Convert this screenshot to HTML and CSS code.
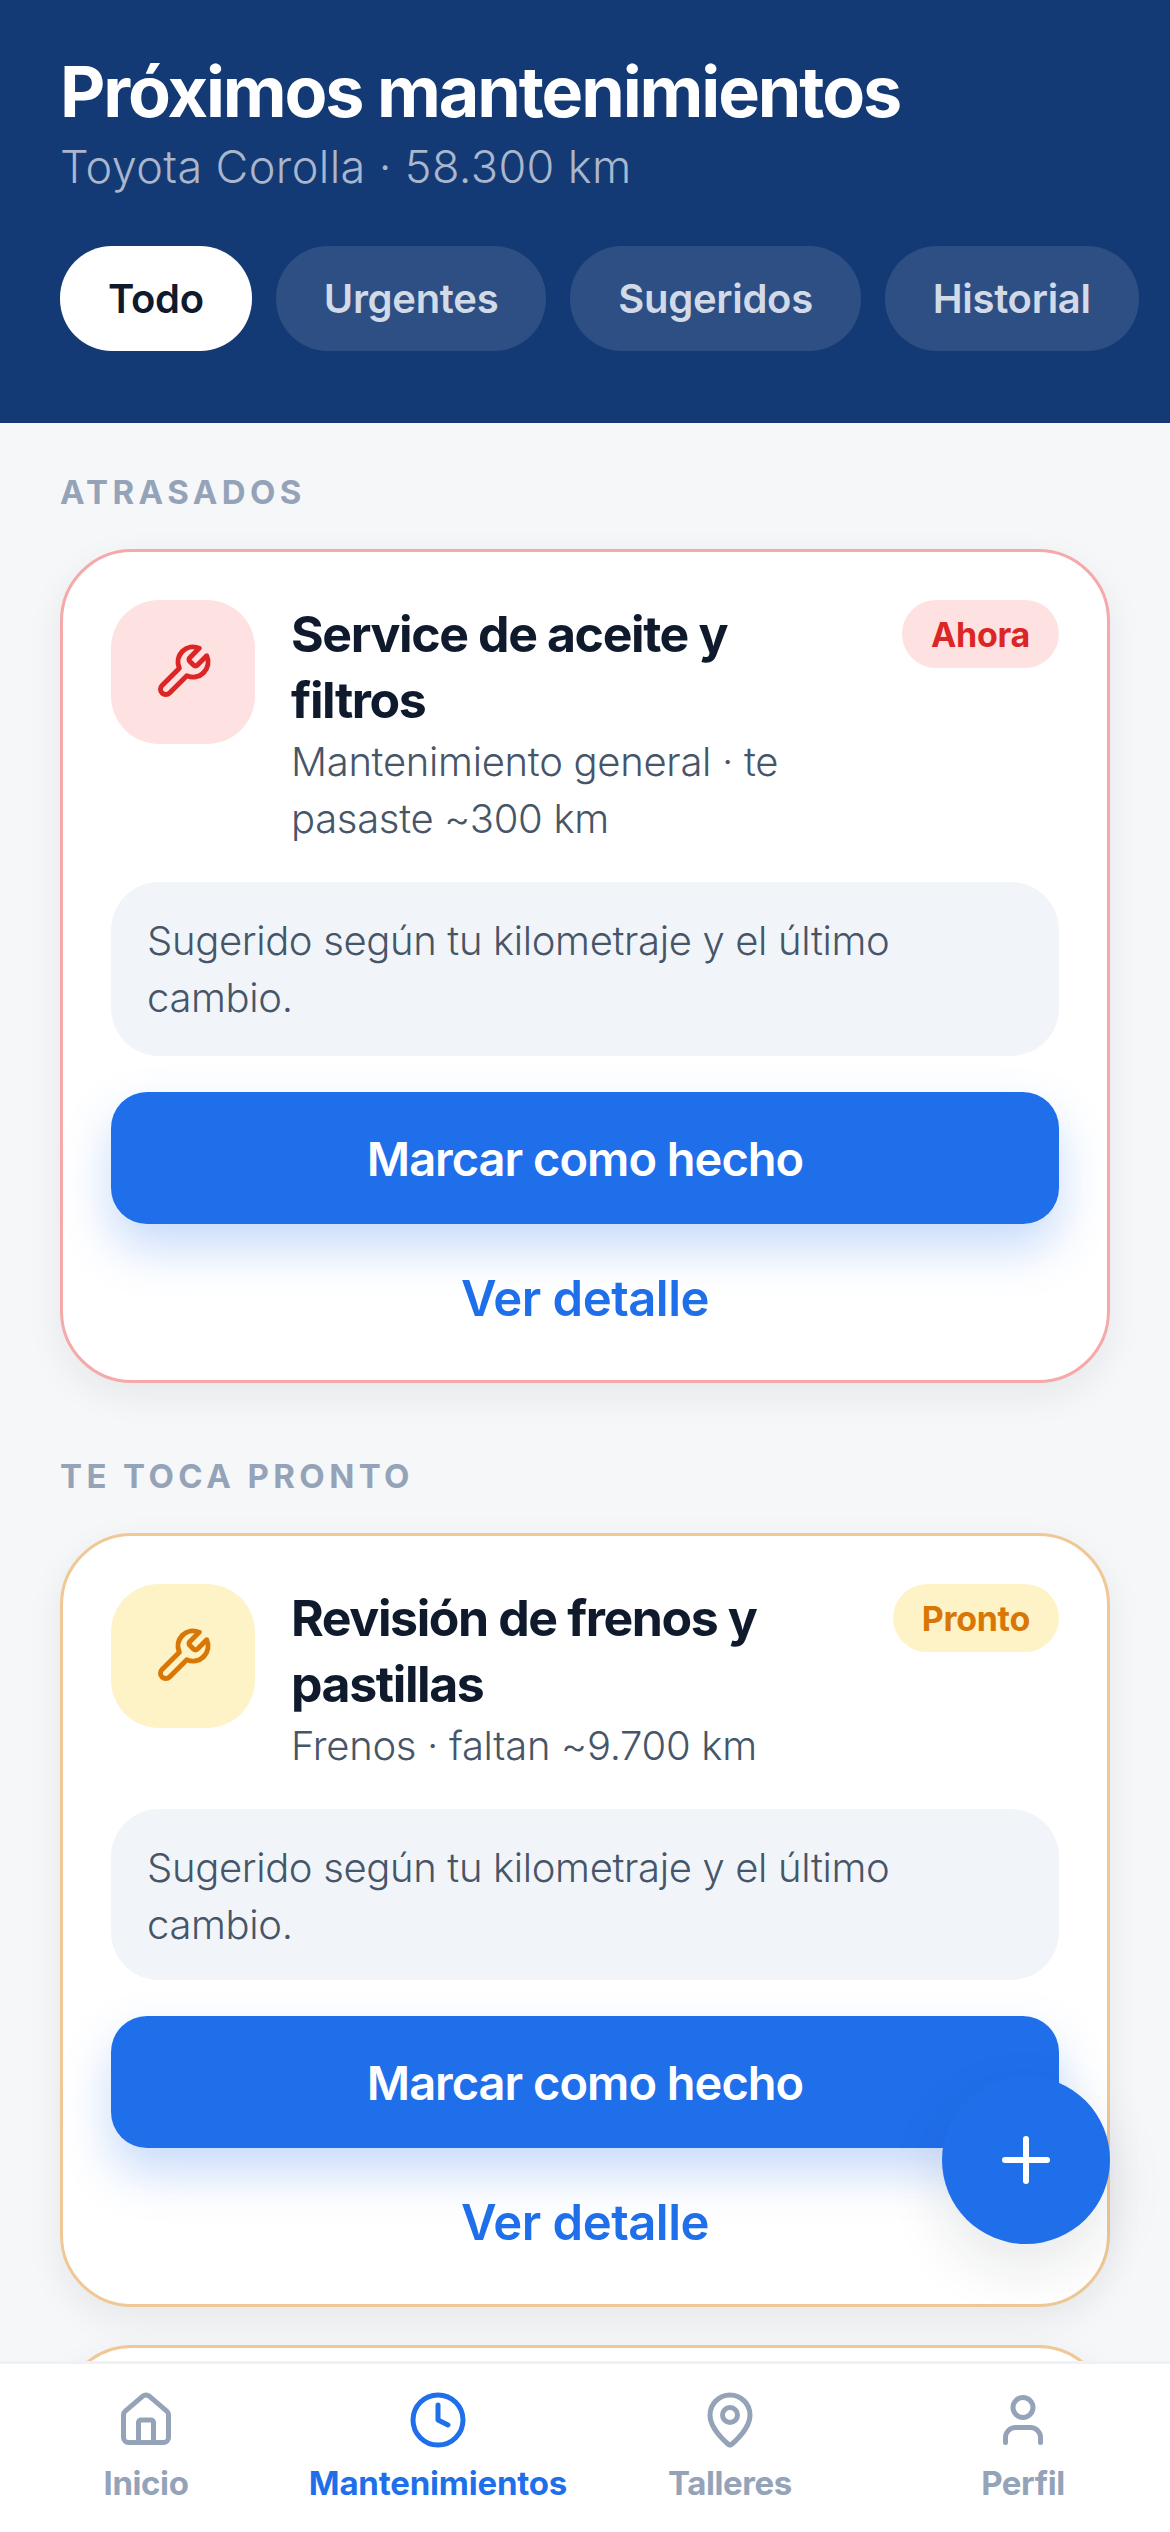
FILE: index.html
```html
<!DOCTYPE html>
<html lang="es">
<head>
  <meta charset="UTF-8"/>
  <meta name="viewport" content="width=device-width, initial-scale=1.0"/>
  <title>Próximos mantenimientos</title>
  <link rel="stylesheet" href="styles.css">
</head>
<body>
  <div class="app">
    <header class="top">
      <h1>Próximos mantenimientos</h1>
      <p class="car">Toyota Corolla · 58.300 km</p>
      <div class="chips">
        <div class="chip active">Todo</div>
        <div class="chip">Urgentes</div>
        <div class="chip">Sugeridos</div>
        <div class="chip">Historial</div>
      </div>
    </header>

    <main class="list">
      <h2>ATRASADOS</h2>
      <section class="card late">
        <div class="head">
          <div class="icon">
            <svg viewBox="0 0 24 24"><path d="M14.7 6.3a1 1 0 0 0 0 1.4l1.6 1.6a1 1 0 0 0 1.4 0l3.77-3.77a6 6 0 0 1-7.94 7.94l-6.91 6.91a2.12 2.12 0 0 1-3-3l6.91-6.91a6 6 0 0 1 7.94-7.94l-3.76 3.76z"/></svg>
          </div>
          <div class="info">
            <h3>Service de aceite y filtros</h3>
            <p>Mantenimiento general · te pasaste ~300 km</p>
          </div>
          <span class="badge">Ahora</span>
        </div>
        <p class="note">Sugerido según tu kilometraje y el último cambio.</p>
        <button class="done">Marcar como hecho</button>
        <a class="more">Ver detalle</a>
      </section>

      <h2>TE TOCA PRONTO</h2>
      <section class="card soon">
        <div class="head">
          <div class="icon">
            <svg viewBox="0 0 24 24"><path d="M14.7 6.3a1 1 0 0 0 0 1.4l1.6 1.6a1 1 0 0 0 1.4 0l3.77-3.77a6 6 0 0 1-7.94 7.94l-6.91 6.91a2.12 2.12 0 0 1-3-3l6.91-6.91a6 6 0 0 1 7.94-7.94l-3.76 3.76z"/></svg>
          </div>
          <div class="info">
            <h3>Revisión de frenos y pastillas</h3>
            <p>Frenos · faltan ~9.700 km</p>
          </div>
          <span class="badge">Pronto</span>
        </div>
        <p class="note">Sugerido según tu kilometraje y el último cambio.</p>
        <button class="done">Marcar como hecho</button>
        <a class="more">Ver detalle</a>
      </section>

      <section class="card soon next"></section>
    </main>

    <button class="fab" aria-label="Agregar">
      <svg viewBox="0 0 48 48"><path d="M24 3v42M3 24h42"/></svg>
    </button>

    <nav class="tabs">
      <a class="tab">
        <svg viewBox="0 0 24 24"><path d="M15 21v-8a1 1 0 0 0-1-1h-4a1 1 0 0 0-1 1v8"/><path d="M3 10a2 2 0 0 1 .709-1.528l7-5.999a2 2 0 0 1 2.582 0l7 5.999A2 2 0 0 1 21 10v9a2 2 0 0 1-2 2H5a2 2 0 0 1-2-2z"/></svg>
        Inicio
      </a>
      <a class="tab on">
        <svg viewBox="0 0 24 24"><circle cx="12" cy="12" r="10"/><path d="M12 6v6l4 2"/></svg>
        Mantenimientos
      </a>
      <a class="tab">
        <svg viewBox="0 0 24 24"><path d="M20 10c0 4.993-5.539 10.193-7.399 11.799a1 1 0 0 1-1.202 0C9.539 20.193 4 14.993 4 10a8 8 0 0 1 16 0"/><circle cx="12" cy="10" r="3"/></svg>
        Talleres
      </a>
      <a class="tab">
        <svg viewBox="0 0 24 24"><path d="M19 21v-2a4 4 0 0 0-4-4H9a4 4 0 0 0-4 4v2"/><circle cx="12" cy="7" r="4"/></svg>
        Perfil
      </a>
    </nav>
  </div>
</body>
</html>
```

FILE: styles.css
```css
* { box-sizing: border-box; margin: 0; padding: 0; }
body { font-family: Inter, "Open Sans", sans-serif; background: #f6f7f9; color: #0f1b2d; }
svg { fill: none; stroke: currentColor; stroke-linecap: round; stroke-linejoin: round; stroke-width: 2; }

.app {
  position: relative; width: 1170px; height: 2532px;
  display: flex; flex-direction: column; overflow: hidden;
}

/* header */
.top { background: #143a75; padding: 53px 0 72px 60px; height: 423px; flex: none; }
.top h1 { font-size: 70px; line-height: 78px; font-weight: 700; letter-spacing: -2.1px; color: #fff; }
.car { font-size: 45px; line-height: 54px; font-weight: 300; letter-spacing: .4px; color: #a9b6cc; margin: 9px 0 52px; }
.chips { display: flex; gap: 24px; }
.chip {
  height: 105px; padding: 0 48px; border-radius: 52px;
  display: flex; align-items: center;
  font-size: 40px; font-weight: 600; letter-spacing: -.3px;
  background: #2e4f84; color: #d3dae7;
}
.chip.active { background: #fff; color: #0f1b2d; }

/* list */
.list { flex: 1; min-height: 0; overflow: hidden; padding: 0 60px; }
.list h2 {
  font-size: 33px; line-height: 42px; font-weight: 700; letter-spacing: 4.4px;
  color: #94a3b8; margin: 48px 0 36px;
}
.card {
  background: #fff; border: 3px solid; border-radius: 72px; padding: 48px;
  box-shadow: 0 12px 36px rgba(15,27,45,.07);
}
.card.late { border-color: #f5a9a9; margin-bottom: 72px; }
.card.soon { border-color: #f0c896; }
.card.next { margin-top: 38px; height: 200px; }

.head { display: flex; align-items: flex-start; margin-bottom: 35px; }
.icon {
  flex: none; width: 144px; height: 144px; border-radius: 48px; margin-right: 36px;
  display: flex; align-items: center; justify-content: center;
}
.icon svg { width: 60px; height: 60px; }
.late .icon { background: #fee2e2; color: #dc2626; }
.soon .icon { background: #fef3c7; color: #d97706; }
.info { flex: 1; min-width: 0; padding-top: 1px; }
.info h3 { font-size: 50px; line-height: 66px; font-weight: 700; letter-spacing: -1.4px; }
.info p { font-size: 40px; line-height: 57px; font-weight: 300; letter-spacing: -.3px; color: #475569; }
.badge {
  flex: none; height: 68px; padding: 0 29px; border-radius: 34px; margin-left: 36px;
  display: flex; align-items: center;
  font-size: 34px; font-weight: 700; letter-spacing: -.3px;
}
.late .badge { background: #fee2e2; color: #dc2626; }
.soon .badge { background: #fef3c7; color: #d97706; }

.note {
  background: #f1f5f9; border-radius: 48px; padding: 30px 36px;
  font-size: 40px; line-height: 57px; font-weight: 300; letter-spacing: -.35px; color: #475569;
  margin-bottom: 36px;
}
.soon .note { padding-bottom: 27px; }
.done {
  display: block; width: 100%; height: 132px; border: 0; border-radius: 36px;
  background: #1f6feb; color: #fff; font: 600 47px Inter, sans-serif; letter-spacing: -1px;
  box-shadow: 0 24px 48px rgba(31,111,235,.25);
}
.more {
  display: block; text-align: center; color: #1f6feb;
  font-size: 49px; line-height: 66px; font-weight: 600; letter-spacing: -.5px;
  margin-top: 42px;
}

/* floating button */
.fab {
  position: absolute; left: 942px; top: 2076px; width: 168px; height: 168px;
  border: 0; border-radius: 50%; background: #1f6feb; color: #fff;
  display: flex; align-items: center; justify-content: center;
  box-shadow: 0 24px 60px rgba(15,27,45,.1);
}
.fab svg { width: 48px; height: 48px; stroke-width: 6; }

/* bottom nav */
.tabs {
  flex: none; height: 171px; background: #fff; border-top: 3px solid #eef2f6;
  display: grid; grid-template-columns: 292px 292px 292px 294px;
}
.tab {
  display: flex; flex-direction: column; align-items: center; padding-top: 26px;
  font-size: 33px; line-height: 42px; font-weight: 700; letter-spacing: -.4px; color: #94a3b8;
  white-space: nowrap;
}
.tab svg { width: 60px; height: 60px; margin-bottom: 12px; }
.tab.on { color: #1f6feb; letter-spacing: -.2px; }
```
